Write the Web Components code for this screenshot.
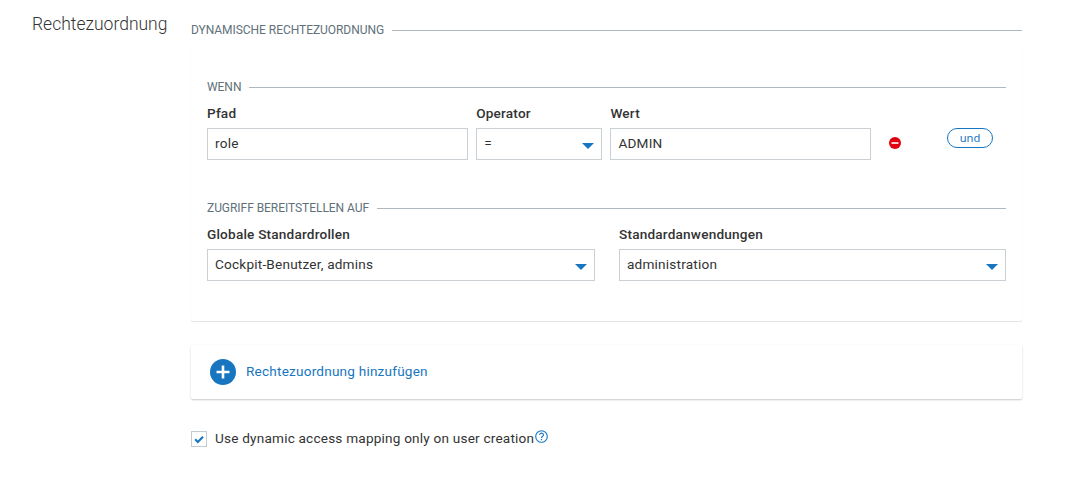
<!DOCTYPE html>
<html lang="de"><head><meta charset="utf-8"><title>Rechtezuordnung</title>
<style>
html,body{margin:0;background:#fff}
body{font:14px/20px Roboto,sans-serif;color:#333;width:1081px;height:483px;overflow:hidden}
</style></head><body>
<mapping-page></mapping-page>
<script>
class BaseElement extends HTMLElement{
  connectedCallback(){ if(!this.shadowRoot) this.attachShadow({mode:'open'}).innerHTML=this.render(); }
}
customElements.define('section-legend',class extends BaseElement{
  render(){return `<style>
  :host{display:flex;align-items:center;height:20px;gap:8px;font-size:12px;line-height:20px;letter-spacing:-.05px;color:#60717a;white-space:nowrap}
  i{flex:1;height:1px;background:#b0b8bf;margin-top:1px}
  </style><span><slot></slot></span><i></i>`}
});
customElements.define('form-field',class extends BaseElement{
  render(){return `<style>
  :host{display:block;min-width:0}
  label{display:block;height:20px;font-size:13.6px;letter-spacing:.2px;font-weight:500;line-height:20px;color:#333;margin-bottom:5px;white-space:nowrap}
  .box{box-sizing:border-box;height:32px;border:1px solid #cbd0d5;background:#fff;padding:0 7px;display:flex;justify-content:space-between;font-size:13.6px;letter-spacing:.2px;line-height:29px}
  svg{margin:14px 0 0;display:block}
  </style><label>${this.getAttribute('label')}</label><div class="box"><span><slot></slot></span>${this.hasAttribute('select')?'<svg width="12" height="6"><path d="M0 0H12L6 6Z" fill="#1776bf"/></svg>':''}</div>`}
});
customElements.define('surface-card',class extends BaseElement{
  render(){return `<style>
  :host{display:block;box-sizing:border-box;background:#fff;border-radius:2px;box-shadow:var(--shadow,0 1px 2px rgba(0,0,0,.22))}
  </style><slot></slot>`}
});
customElements.define('pill-button',class extends BaseElement{
  render(){return `<style>
  :host{display:block}
  button{display:block;box-sizing:border-box;width:46px;height:20px;margin:0;padding:0 0 1px;border:1px solid #1776bf;border-radius:10px;background:#fff;color:#1776bf;font:11.2px/17px "Noto Sans",sans-serif}
  </style><button><slot></slot></button>`}
});
customElements.define('add-action',class extends BaseElement{
  render(){return `<style>
  :host{display:flex;align-items:center;gap:10px;height:54px;padding-left:19px;box-sizing:border-box;color:#1776bf;font-size:13.6px;letter-spacing:.2px}
  span{margin-top:-2px}
  </style><svg width="26" height="26" viewBox="0 0 26 26"><circle cx="13" cy="13" r="13" fill="#1776bf"/><path d="M13 6.5V19.5M6.5 13H19.5" stroke="#fff" stroke-width="2.6"/></svg><span><slot></slot></span>`}
});
customElements.define('check-option',class extends BaseElement{
  render(){return `<style>
  :host{display:flex;height:20px;font-size:13.6px;letter-spacing:.2px;white-space:nowrap}
  .box{box-sizing:border-box;width:16px;height:16px;border:1px solid #c3cad0;margin:2px 8px 0 0}
  .box svg{display:block}
  .text{margin-top:-1px}
  .help{margin:1px 0 0 1px}
  </style><span class="box"><svg width="14" height="14" viewBox="0 0 14 14"><path d="M3.2 7.3L5.8 9.9L11 4.8" fill="none" stroke="#1776bf" stroke-width="2.1"/></svg></span><span class="text"><slot></slot></span>
  <svg class="help" width="13" height="13" viewBox="0 0 13 13" fill="none" stroke="#1776bf"><circle cx="6.5" cy="6.5" r="5.8" stroke-width="1.1"/><path d="M4.6 5.1C4.6 2.5 8.5 2.6 8.5 4.9C8.5 6.2 6.5 6.3 6.5 8" stroke-width="1.1"/><path d="M6.5 9V10.2" stroke-width="1.2"/></svg>`}
});
customElements.define('mapping-page',class extends BaseElement{
  render(){return `<style>
  :host{display:grid;grid-template-columns:159px 831px;padding:20px 0 0 32px}
  h2{margin:-7px 0 0;font-size:17.5px;font-weight:300;line-height:22px;color:#333}
  .rules{height:276px;margin-top:5px;padding:32px 16px 0;--shadow:0 1px 1px rgba(0,0,0,.11),0 0 1px rgba(0,0,0,.05)}
  .cond{display:grid;grid-template-columns:261px 126px 261px 1fr 46px;column-gap:8.2px;margin:6px 13px 0 0}
  .remove{margin:34px 0 0 9.4px}
  pill-button{margin-top:25px}
  .zugriff{margin-top:38px}
  .access{display:grid;grid-template-columns:388px 387px;column-gap:24px;margin-top:6px}
  .add{margin-top:24px}
  check-option{margin-top:30px}
  </style>
  <h2>Rechtezuordnung</h2>
  <main>
   <section-legend>DYNAMISCHE RECHTEZUORDNUNG</section-legend>
   <surface-card class="rules">
    <section-legend>WENN</section-legend>
    <div class="cond">
     <form-field label="Pfad">role</form-field>
     <form-field label="Operator" select>=</form-field>
     <form-field label="Wert">ADMIN</form-field>
     <svg class="remove" width="12" height="12" viewBox="0 0 12 12"><circle cx="6" cy="6" r="6" fill="#e3000f"/><path d="M2.5 6H9.5" stroke="#fff" stroke-width="1.6"/></svg>
     <pill-button>und</pill-button>
    </div>
    <section-legend class="zugriff">ZUGRIFF BEREITSTELLEN AUF</section-legend>
    <div class="access">
     <form-field label="Globale Standardrollen" select>Cockpit-Benutzer, admins</form-field>
     <form-field label="Standardanwendungen" select>administration</form-field>
    </div>
   </surface-card>
   <surface-card class="add"><add-action>Rechtezuordnung hinzufügen</add-action></surface-card>
   <check-option>Use dynamic access mapping only on user creation</check-option>
  </main>`}
});
</script></body></html>
